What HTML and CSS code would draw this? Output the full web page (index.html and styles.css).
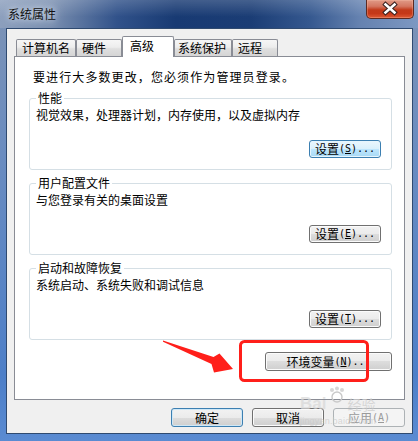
FILE: index.html
```html
<!DOCTYPE html>
<html lang="zh-CN">
<head>
<meta charset="utf-8">
<title>系统属性</title>
<link rel="stylesheet" href="styles.css">
</head>
<body>
<div class="window">
  <div class="titlebar">
    <span class="title">系统属性</span>
    <button class="close" aria-label="关闭">
      <svg width="48" height="19" viewBox="0 0 48 19">
        <path d="M19.5 5.5 L28.5 13.5 M28.5 5.5 L19.5 13.5" stroke="#3a2220" stroke-width="4.6" stroke-linecap="square" fill="none"/>
        <path d="M19.5 5.5 L28.5 13.5 M28.5 5.5 L19.5 13.5" stroke="#ffffff" stroke-width="2.6" stroke-linecap="square" fill="none"/>
      </svg>
    </button>
  </div>
  <div class="frame">
    <div class="client">
      <div class="tabs">
        <div class="tab t1">计算机名</div>
        <div class="tab t2">硬件</div>
        <div class="tab t3 active">高级</div>
        <div class="tab t4">系统保护</div>
        <div class="tab t5">远程</div>
      </div>
      <div class="panel">
        <p class="intro">要进行大多数更改，您必须作为管理员登录。</p>
        <fieldset class="group">
          <legend>性能</legend>
          <p class="desc">视觉效果，处理器计划，内存使用，以及虚拟内存</p>
          <div class="btnrow"><button class="btn focus">设置<span class="lat">(<u>S</u>)...</span></button></div>
        </fieldset>
        <fieldset class="group">
          <legend>用户配置文件</legend>
          <p class="desc">与您登录有关的桌面设置</p>
          <div class="btnrow"><button class="btn">设置<span class="lat">(<u>E</u>)...</span></button></div>
        </fieldset>
        <fieldset class="group">
          <legend>启动和故障恢复</legend>
          <p class="desc">系统启动、系统失败和调试信息</p>
          <div class="btnrow"><button class="btn">设置<span class="lat">(<u>T</u>)...</span></button></div>
        </fieldset>
        <div class="envrow"><button class="btn wide">环境变量<span class="lat">(<u>N</u>)...</span></button></div>
      </div>
      <div class="footer">
        <button class="btn big default">确定</button>
        <button class="btn big">取消</button>
        <button class="btn big" disabled>应用<span class="lat">(<u>A</u>)</span></button>
      </div>
    </div>
  </div>

  <svg class="annot" width="418" height="441" viewBox="0 0 418 441">
    <rect x="240.5" y="341.5" width="127" height="39" rx="4" ry="4" fill="none" stroke="#ff1f1a" stroke-width="3"/>
    <polygon points="163,340.5 213.5,357 219.5,353.5 233,369 214,372.5 211.5,364 163,341.8" fill="#ff1f1a"/>
  </svg>

  <div class="watermark">
    <div class="wm-top"><span class="wm-bai">Bai</span><svg class="wm-paw" width="18" height="18" viewBox="0 0 18 18"><circle cx="9" cy="11" r="5" fill="none" stroke="#c9c9c9" stroke-width="1.4"/><circle cx="4" cy="4" r="2" fill="#d6d6d6"/><circle cx="9" cy="2.5" r="2" fill="#d6d6d6"/><circle cx="14" cy="4" r="2" fill="#d6d6d6"/></svg><span class="wm-jy">经验</span></div>
    <div class="wm-url">jingyan.baidu.com</div>
  </div>
</div>
</body>
</html>
```

FILE: styles.css
```css
* { box-sizing: border-box; }
html, body { margin: 0; padding: 0; }
body {
  width: 418px;
  height: 441px;
  overflow: hidden;
  font: 12px/14px "Noto Sans CJK SC", "Noto Sans", sans-serif;
  color: #000;
}

.window {
  position: relative;
  width: 418px;
  height: 441px;
  display: flex;
  flex-direction: column;
  background: linear-gradient(180deg, #7d93b5 0%, #6a8cc0 35%, #4d7fc8 85%, #5a8bd2 100%);
}

.titlebar {
  height: 28px;
  flex: none;
  display: flex;
  justify-content: space-between;
  align-items: flex-start;
  padding: 0 4px 0 8px;
  background:
    linear-gradient(180deg, rgba(255,255,255,0.18) 0%, rgba(255,255,255,0) 60%),
    linear-gradient(90deg, #8c9fbd 0%, #7a8fb0 12%, #31528a 28%, #183a73 42%, #1b3d75 60%, #35588f 74%, #6582b0 86%, #7d98c2 100%);
}

.title {
  line-height: 28px;
  color: #111;
  text-shadow: 0 0 6px rgba(230,238,248,0.95), 0 0 12px rgba(220,230,245,0.8);
}

.close {
  width: 48px;
  height: 19px;
  padding: 0;
  border: 1px solid #5c2a22;
  border-top: 0;
  border-radius: 0 0 5px 5px;
  background: linear-gradient(180deg, #e09a86 0%, #d47660 35%, #c23a1a 55%, #c53818 75%, #de5a34 100%);
  box-shadow: inset 0 0 0 1px rgba(255,200,180,0.3);
  display: block;
}
.close svg { display: block; margin: -1px 0 0 -1px; }

.frame {
  flex: 1;
  display: flex;
  padding: 0 5px 7px 6px;
}

.client {
  flex: 1;
  display: flex;
  flex-direction: column;
  border: 1px solid #2f4a70;
  background: #f0f0f0;
  padding: 7px 7px 6px 7px;
}

.tabs {
  display: flex;
  align-items: flex-end;
  height: 20px;
  flex: none;
  padding-left: 2px;
  position: relative;
  z-index: 1;
}
.tab {
  height: 17px;
  border: 1px solid #898c95;
  border-bottom: 0;
  border-radius: 2px 2px 0 0;
  padding-left: 5px;
  line-height: 16px;
  white-space: nowrap;
  background: linear-gradient(180deg, #f6f6f6 0%, #ededed 45%, #dfdfdf 55%, #d5d5d5 100%);
}
.t1 { width: 60px; }
.t2 { width: 46px; }
.t3 { width: 52px; }
.t4 { width: 58px; padding-left: 3px; }
.t5 { width: 46px; }
.tab.active {
  height: 21px;
  margin-bottom: -1px;
  background: #fff;
  padding-left: 7px;
  line-height: 18px;
}

.panel {
  flex: 1;
  display: flex;
  flex-direction: column;
  background: #fff;
  border: 1px solid #898c95;
  padding: 13px 12px 0 14px;
}

.intro {
  margin: 0 0 0 4px;
  line-height: 14px;
  letter-spacing: 1.1px;
}

.group {
  margin: 8px 0 0;
  padding: 0 10px 11px 6px;
  border: 1px solid #d5dfe5;
  border-radius: 3px;
  min-width: 0;
}
.group + .group { margin-top: 7px; }
.group legend {
  padding: 0 2px;
  line-height: 12px;
}
.desc {
  margin: 4px 0 0;
  line-height: 14px;
}
.btnrow {
  display: flex;
  justify-content: flex-end;
  margin-top: 18px;
}

.btn {
  font: inherit;
  width: 72px;
  height: 18px;
  padding: 0;
  border: 1px solid #707070;
  border-radius: 3px;
  color: #000;
  background: linear-gradient(180deg, #f2f2f2 0%, #ebebeb 50%, #dddddd 50%, #cfcfcf 100%);
  box-shadow: inset 0 0 0 1px #fbfbfb;
  display: flex;
  align-items: center;
  justify-content: center;
  line-height: 14px;
}
.btn.focus {
  border-color: #3c7fb1;
  background: linear-gradient(180deg, #eaf6fd 0%, #d9f0fc 50%, #bee6fd 50%, #a7d9f5 100%);
  box-shadow: inset 0 0 0 1px #e6f5fd;
}
.btn.default {
  border-color: #3c7fb1;
  box-shadow: inset 0 0 0 1px #cfe8f7;
}
.btn:disabled {
  border-color: #adb2b5;
  background: #f4f4f4;
  color: #9a9a9a;
  box-shadow: none;
}
.btn.wide { width: 127px; height: 19px; }
.btn.big { height: 19px; }

.lat {
  font-family: "DejaVu Sans Mono", "Liberation Mono", monospace;
  font-size: 10px;
}
.lat u { text-decoration-thickness: 1px; text-underline-offset: 1px; }

.envrow {
  display: flex;
  justify-content: flex-end;
  margin-top: 12px;
}

.footer {
  flex: none;
  display: flex;
  justify-content: flex-end;
  gap: 9px;
  margin-top: 8px;
}

.annot {
  position: absolute;
  left: 0;
  top: 0;
  pointer-events: none;
}

.watermark {
  position: absolute;
  left: 300px;
  top: 384px;
  width: 92px;
  pointer-events: none;
  color: rgba(205,205,205,0.75);
}
.wm-top { display: flex; align-items: flex-end; height: 28px; }
.wm-bai {
  font: bold 17px/17px "Liberation Sans", sans-serif;
  color: rgba(215,215,215,0.7);
  margin-right: 2px;
}
.wm-paw { align-self: flex-start; margin-top: 2px; }
.wm-jy { font-size: 14px; line-height: 16px; margin-left: 1px; color: rgba(205,205,205,0.75); }
.wm-url {
  font: 9px/10px "Liberation Sans", sans-serif;
  margin-top: 4px;
  color: rgba(200,200,200,0.7);
  letter-spacing: 0.2px;
}
```
